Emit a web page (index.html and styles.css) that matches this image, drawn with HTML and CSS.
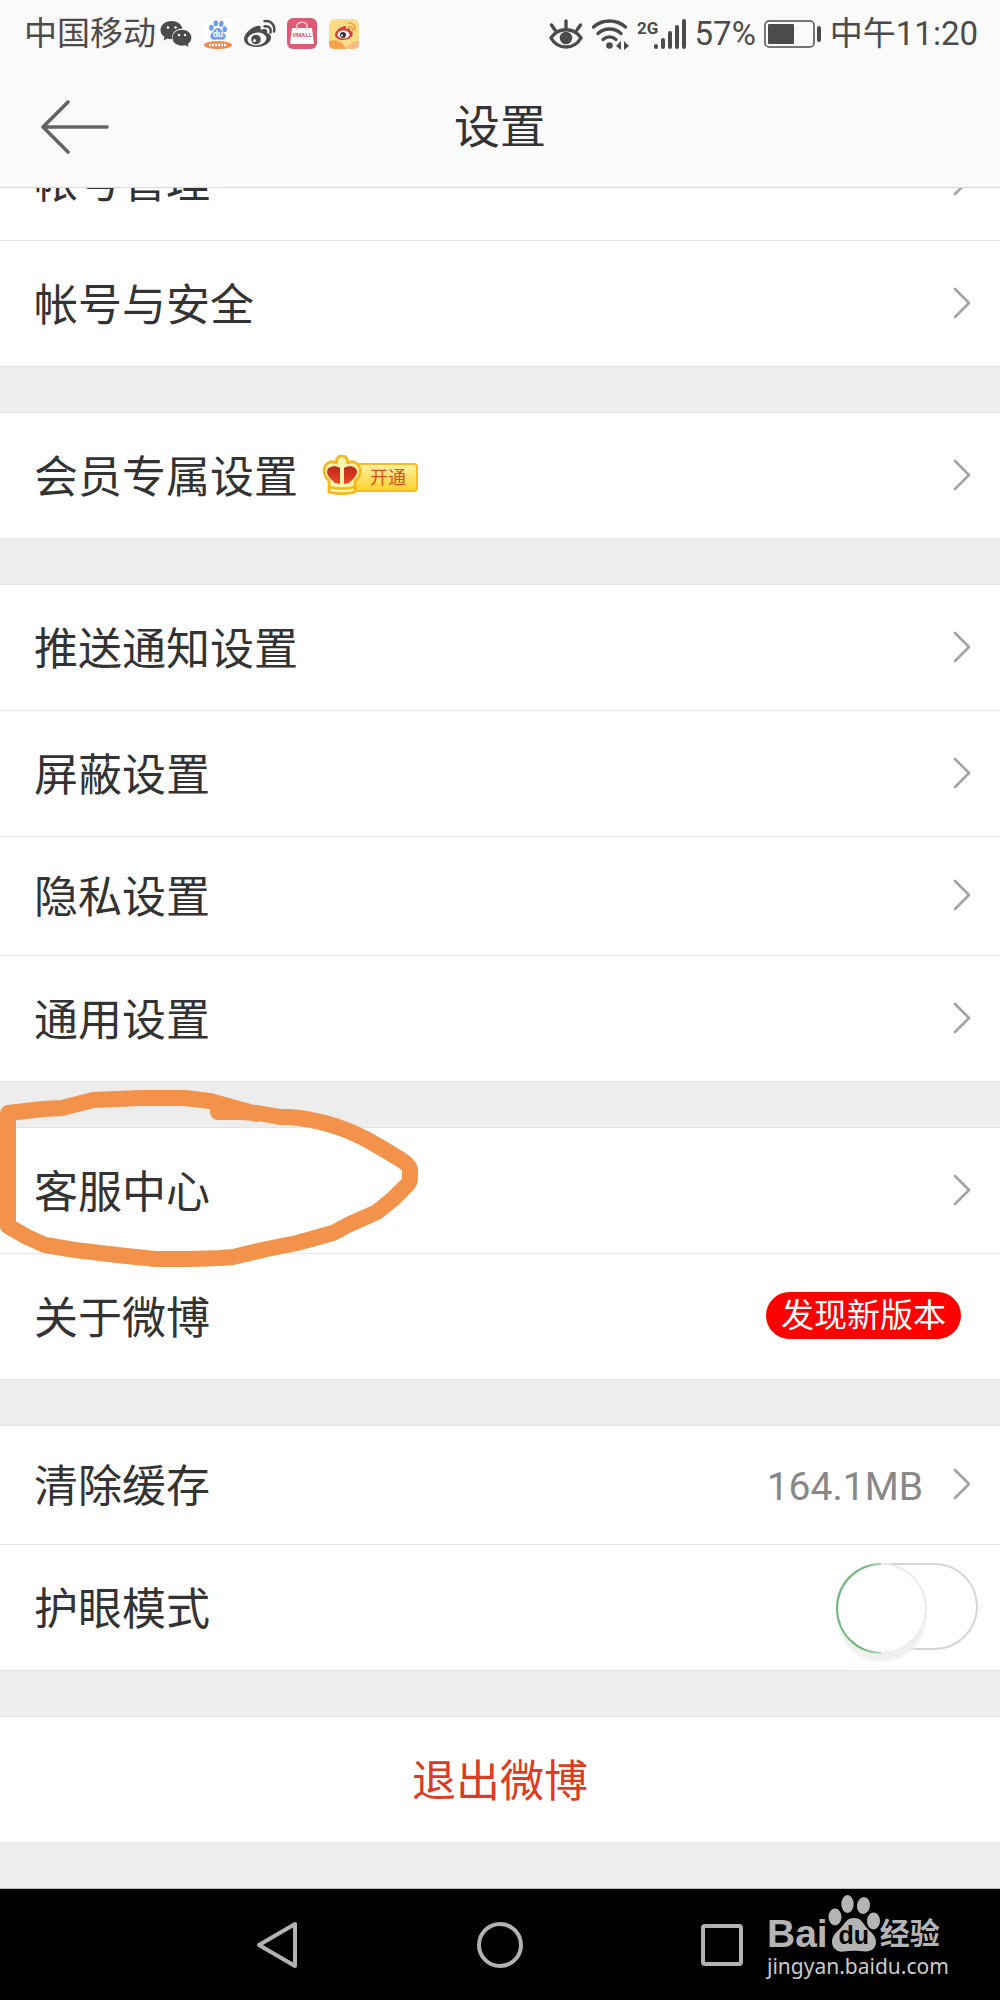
FILE: index.html
```html
<!DOCTYPE html>
<html lang="zh-CN">
<head>
<meta charset="utf-8">
<meta name="viewport" content="width=device-width, initial-scale=1">
<title>设置</title>
<link rel="stylesheet" href="styles.css">
</head>
<body>
<svg class="defs" aria-hidden="true">
  <symbol id="chevron" viewBox="0 0 18 32"><path d="M2 2 16 16 2 30" fill="none" stroke="#a3a3a3" stroke-width="2.6" stroke-linecap="round" stroke-linejoin="round"/></symbol>
  <symbol id="paw" viewBox="0 0 52 57"><ellipse cx="7" cy="22" rx="6.5" ry="8.5"/><ellipse cx="19.500" cy="9" rx="6.200" ry="9"/><ellipse cx="35.500" cy="10.500" rx="6.500" ry="8.500" transform="rotate(10 35.500 10.500)"/><ellipse cx="45.500" cy="26" rx="6.500" ry="8.500"/><path d="M26 23c7 0 9 5 12 9 4 5 10 8 10 15 0 6-5 10-11 9.500-8-1-14-1-21 0C9 57.500 4 53 4 47c0-7 5-10 9.500-15 3.500-4 5.500-9 12.500-9z"/></symbol>
  <symbol id="weibo" viewBox="0 0 32 32"><path stroke="none" d="M13 8C7.500 9 0 16 0 21c0 5 6 8 12.500 8C21 29 27 24 27 19.500c0-2.500-2-4-4-4.500.900-3-.500-5.500-6.500-3C17.500 8.500 16 7.300 13 8z"/><path d="M20.500 8.500c4-1 7 2 6 6M20.500 3.200c6.500-1.500 11 4.500 9.500 10.300" fill="none" stroke-width="2.400" stroke-linecap="round"/></symbol>
</svg>
<div class="app">
  <header class="top">
    <div class="status">
      <div class="status-side">
        <span>中国移动</span>
        <svg class="app-icon" viewBox="0 0 32 32" aria-label="微信"><path fill="#4b4b4b" d="M11.500 3C5 3 .500 7 .500 12c0 3 1.500 5.300 4 7l-1 3.500 4-2c1.500.500 3 .700 4.500.600-.800-6 4-10.600 10.600-10.600C21.500 6 17 3 11.500 3z"/><path fill="#4b4b4b" d="M22 11.800c-5.500 0-9.500 3.500-9.500 8s4 7.900 9.500 7.900c1.200 0 2.300-.200 3.400-.500l3.200 1.800-.800-3c2.200-1.500 3.600-3.700 3.600-6.200 0-4.500-4.400-8-9.400-8z"/><g fill="#fafafa"><circle cx="8" cy="9.500" r="1.300"/><circle cx="15.500" cy="9.500" r="1.300"/><circle cx="19" cy="17" r="1.200"/><circle cx="25" cy="17" r="1.200"/></g></svg>
        <svg class="app-icon" viewBox="0 0 32 32" aria-label="百度"><rect x="2" y="1" width="28" height="29" rx="5" fill="#fff"/><use href="#paw" x="7" y="2" width="18" height="20" fill="#6f9bf5"/><text x="16" y="19" class="mini-du">du</text><ellipse cx="16" cy="27" rx="14" ry="4" fill="#f5894b"/><path d="M7 27h18" stroke="#fff" stroke-width="2.500" stroke-dasharray="2 1"/></svg>
        <svg class="app-icon" viewBox="0 0 32 32" aria-label="微博"><use href="#weibo" fill="#4b4b4b" stroke="#4b4b4b"/><ellipse cx="13" cy="21" rx="9.500" ry="6.300" fill="#fafafa" transform="rotate(-8 13 21)"/><circle cx="12" cy="21.500" r="4.800" fill="#4b4b4b"/><circle cx="10.500" cy="22.500" r="1.600" fill="#fafafa"/></svg>
        <svg class="app-icon" viewBox="0 0 32 32" aria-label="VMALL"><rect x="1" y="0" width="30" height="31" rx="6" fill="#dc5a74"/><path d="M6 10h20l2 16H4z" fill="#fff"/><path d="M11 12V8c0-5 10-5 10 0v4" fill="none" stroke="#f6c6cf" stroke-width="1.600"/><text x="16" y="19" class="mini-vmall">VMALL</text></svg>
        <svg class="app-icon" viewBox="0 0 32 32" aria-label="微博"><rect x="1" y="1" width="30" height="30" rx="6" fill="#fbdd88"/><path d="M1 23c7-2 13 0 17 8H7c-4 0-6-2-6-5z" fill="#f7a04d"/><path d="M18 30c1-5 6-3 7-6 3-1 5-1 6-1v3c0 3-2 5-5 5z" fill="#fcb98a"/><use href="#weibo" x="7" y="3" width="21" height="21" fill="#d9413e" stroke="#f0a13e"/><ellipse cx="15.500" cy="16.500" rx="6" ry="4" fill="#fff"/><circle cx="15" cy="17" r="3" fill="#333"/><circle cx="14" cy="17.500" r="1" fill="#fff"/></svg>
      </div>
      <div class="status-side status-right">
        <svg class="eye" viewBox="0 0 34 32" aria-hidden="true"><g fill="none" stroke="#4b4b4b" stroke-width="3.400" stroke-linecap="round"><path d="M2 20c7-11 23-11 30 0-7 12-23 12-30 0zM17 10V3M6 12 2.500 7M28 12l3.500-5"/></g><circle cx="17" cy="20" r="6.300" fill="#4b4b4b"/></svg>
        <svg class="wifi" viewBox="0 0 38 32" aria-hidden="true"><g fill="none" stroke="#4b4b4b" stroke-width="3.400" stroke-linecap="round"><path d="M2.500 9c9-8 23-8 32 0M7 15.500c6.500-6 16.500-6 23 0M12 21.500c4-3.500 9-3.500 13 0"/></g><circle cx="18.500" cy="27.500" r="3.300" fill="#4b4b4b"/><path d="M30 23v9l-5-4zM32 23v9M33 23l5 5-5 4z" fill="#4b4b4b"/></svg>
        <svg class="signal" viewBox="0 0 50 32" aria-hidden="true"><text x="0" y="16" class="net">2G</text><g stroke="#4b4b4b" stroke-width="4" stroke-linecap="round"><path d="M19 28v1M26 22v7M33 15v14M40 9v20M47 3v26"/></g></svg>
        <span>57%</span>
        <svg class="battery" viewBox="0 0 58 28" aria-hidden="true"><rect x="1" y="1" width="49" height="26" rx="4" fill="none" stroke="#4b4b4b" stroke-width="1.500"/><rect x="4" y="4" width="26" height="20" rx="1" fill="#4b4b4b"/><path d="M55 8v12" stroke="#4b4b4b" stroke-width="4" stroke-linecap="round"/></svg>
        <span>中午11:20</span>
      </div>
    </div>
    <div class="title-bar">
      <button class="back" type="button" aria-label="返回"><svg viewBox="0 0 68 54"><path d="M27 2 2 27l25 25M2 27h64" fill="none" stroke="#646464" stroke-width="3.600" stroke-linecap="round" stroke-linejoin="round"/></svg></button>
      <h1>设置</h1>
    </div>
  </header>

  <main class="list">
    <section class="group">
      <a class="row short" href="#accounts"><span>帐号管理</span><svg class="chevron"><use href="#chevron"/></svg></a>
      <a class="row" href="#security"><span>帐号与安全</span><svg class="chevron"><use href="#chevron"/></svg></a>
    </section>
    <section class="group">
      <a class="row" href="#vip"><span>会员专属设置</span>
        <span class="vip"><svg class="crown" viewBox="0 0 40 40" aria-hidden="true"><defs><linearGradient id="gem" x1="0" y1="0" x2="0" y2="1"><stop offset="0" stop-color="#b92a1a"/><stop offset="1" stop-color="#f2452a"/></linearGradient></defs><path d="M15 8.500a5.500 5.500 0 1 1 10 0c4-3 9-2 11.500 2 3.500 5 1.500 11-3.500 15.500v11c-8 2-18 2-26 0V26C2.500 21.500.500 15.500 3.500 10.500 6 6.500 11 5.500 15 8.500z" fill="#fff3ae" stroke="#f6b91b" stroke-width="2.800"/><path d="M18 13C12 9.500 5 12 5 17c0 4 5 8 8 11l5 1zM22 13c6-3.500 13-1 13 4 0 4-5 8-8 11l-5 1z" fill="url(#gem)"/><path d="M7 32c8 2 18 2 26 0" fill="none" stroke="#f6b91b" stroke-width="2.500"/></svg><span class="vip-label">开通</span></span>
        <svg class="chevron"><use href="#chevron"/></svg></a>
    </section>
    <section class="group">
      <a class="row" href="#push"><span>推送通知设置</span><svg class="chevron"><use href="#chevron"/></svg></a>
      <a class="row" href="#block"><span>屏蔽设置</span><svg class="chevron"><use href="#chevron"/></svg></a>
      <a class="row short" href="#privacy"><span>隐私设置</span><svg class="chevron"><use href="#chevron"/></svg></a>
      <a class="row" href="#general"><span>通用设置</span><svg class="chevron"><use href="#chevron"/></svg></a>
    </section>
    <section class="group">
      <a class="row marked" href="#service"><span>客服中心</span><svg class="chevron"><use href="#chevron"/></svg>
        <svg class="ring" viewBox="0 0 420 182" aria-hidden="true"><path d="M218 24h22l18 1 22 4 10 0q45 4 83 26l17 10 13 8q7 5 7 9v9q0 4-6 9l-11 11-16 13-27 12-17 9-36 10-30 6-34 8-13 1-30 1h-35l-38-4-42-5-30-5-18-8-19-11V25l35-4 19-1 31-8 47-2h45l25 3 47 13" fill="none" stroke="#f3934b" stroke-width="16" stroke-linecap="round" stroke-linejoin="round"/></svg></a>
      <a class="row" href="#about"><span>关于微博</span><span class="badge">发现新版本</span></a>
    </section>
    <section class="group">
      <a class="row short" href="#cache"><span>清除缓存</span><span class="value">164.1MB</span><svg class="chevron"><use href="#chevron"/></svg></a>
      <div class="row"><label for="eye-care">护眼模式</label><input class="switch" id="eye-care" type="checkbox" role="switch"></div>
    </section>
    <section class="group">
      <button class="row logout" type="button">退出微博</button>
    </section>
  </main>

  <nav class="nav">
    <button type="button" aria-label="返回"><svg viewBox="0 0 48 48"><path d="M41 3v42L5 24z"/></svg></button>
    <button type="button" aria-label="主屏幕"><svg viewBox="0 0 48 48"><circle cx="24" cy="24" r="21"/></svg></button>
    <button type="button" aria-label="最近任务"><svg viewBox="0 0 48 48"><rect x="5" y="5" width="38" height="38" rx="2"/></svg></button>
    <div class="watermark">
      <div class="brand"><span class="bai">Bai</span><span class="paw"><svg viewBox="0 0 52 57" aria-hidden="true"><use href="#paw" fill="#b4b4b4"/></svg><span class="du">du</span></span><span class="jy">经验</span></div>
      <div class="site">jingyan.baidu.com</div>
    </div>
  </nav>
</div>
</body>
</html>
```
FILE: styles.css
```css
* { box-sizing: border-box; }
body {
  margin: 0;
  background: #ededed;
  color: #333;
  font-family: Roboto, "Noto Sans CJK SC", sans-serif;
}
button, input { font: inherit; margin: 0; }
button { background: none; border: 0; padding: 0; color: inherit; }
a { color: inherit; text-decoration: none; }
svg { display: block; flex: none; }
.defs { position: absolute; width: 0; height: 0; }

.app { min-height: 100vh; display: flex; flex-direction: column; overflow: hidden; }

/* Status bar and title */
.top { position: relative; z-index: 2; background: #fafafa; border-bottom: 1px solid #d8d8d8; }
.status {
  display: flex;
  justify-content: space-between;
  height: 68px;
  padding: 0 22px 0 24px;
  color: #4b4b4b;
  font-size: 33px;
  line-height: 72px;
}
.status-side { display: flex; align-items: center; gap: 10px; white-space: nowrap; }
.status-right { gap: 8px; }
.app-icon { width: 32px; height: 32px; }
.app-icon:first-of-type { margin-left: -6px; }
.eye { width: 34px; height: 32px; }
.wifi { width: 38px; height: 32px; }
.signal { width: 50px; height: 32px; }
.battery { width: 58px; height: 28px; }
.net { font: 700 17px "Roboto", sans-serif; fill: #4b4b4b; }
.mini-du { font: 700 9px Roboto, sans-serif; fill: #fff; text-anchor: middle; }
.mini-vmall { font: 700 6px Roboto, sans-serif; fill: #dc5a74; text-anchor: middle; }
.title-bar {
  display: grid;
  grid-template-columns: 1fr auto 1fr;
  align-items: center;
  height: 119px;
  padding: 0 41px 2px;
}
.back svg { width: 68px; height: 54px; }
h1 { margin: 0; font-size: 46px; font-weight: 400; line-height: 60px; }

/* Settings list, scrolled partly under the header */
.list { flex: 1; margin-top: -67px; display: flex; flex-direction: column; gap: 45px; padding-bottom: 44px; }
.group { background: #fff; border-top: 1px solid #e4e4e4; }
.row {
  display: flex;
  align-items: center;
  width: 100%;
  height: 126px;
  padding: 4px 29px 0 34px;
  border-bottom: 1px solid #e6e6e6;
  font-size: 44px;
  line-height: 60px;
}
.short { height: 119px; }
.chevron { width: 18px; height: 32px; margin-left: auto; margin-bottom: 6px; }
.value { margin-left: auto; color: #888; font-size: 39px; }
.value + .chevron { margin-left: 30px; }
.badge {
  margin: 0 10px 6px auto;
  padding: 0 15px;
  border-radius: 24px;
  background: #f00;
  color: #fff;
  font-size: 33px;
  line-height: 47px;
}
.logout { justify-content: center; padding: 4px 0 0; color: #dd3b23; }

/* Membership badge */
.vip { display: flex; align-items: center; margin: 0 0 6px 24px; }
.crown { width: 40px; height: 40px; position: relative; }
.vip-label {
  margin: 6px 0 0 -8px;
  padding: 0 10px 0 14px;
  height: 29px;
  border: 2px solid #f8b928;
  border-radius: 4px;
  background: linear-gradient(#fff0a0, #ffd42e);
  color: #d9501e;
  font-size: 18px;
  line-height: 25px;
}

/* Eye-care switch */
.switch {
  appearance: none;
  width: 142px;
  height: 87px;
  margin: 0 -7px 6px auto;
  border: 2px solid #d6d6d6;
  border-radius: 44px;
  background: #fff;
}
.switch::before {
  content: "";
  display: block;
  width: 87px;
  height: 87px;
  margin: -2px;
  border: 2px solid transparent;
  border-radius: 50%;
  background:
    linear-gradient(#fff, #fff) padding-box,
    linear-gradient(90deg, #6db87b 0 30%, #b5d9bb 50%, #ececec 50%) border-box;
  box-shadow: 0 9px 3px -1px #f0f0f0;
}
.switch:checked::before { margin-left: 53px; }

/* Hand-drawn ring around the marked row */
.marked { position: relative; }
.ring { position: absolute; left: 0; top: -40px; width: 420px; height: 182px; pointer-events: none; }

/* System navigation */
.nav {
  position: relative;
  display: flex;
  justify-content: center;
  align-items: center;
  gap: 174px;
  height: 112px;
  background: #000;
  border-top: 1px solid #bbb;
}
.nav button svg { width: 48px; height: 48px; fill: none; stroke: #b2b2b2; stroke-width: 4; stroke-linejoin: round; }
.watermark { position: absolute; right: 56px; bottom: 20px; width: 177px; color: #b4b4b4; }
.brand { display: flex; align-items: flex-end; height: 57px; }
.bai { font: 700 39px/36px "Liberation Sans", sans-serif; }
.paw { position: relative; width: 52px; height: 57px; }
.du {
  position: absolute;
  inset: 28px 0 0;
  color: #000;
  font: 700 25px/24px "Liberation Sans", sans-serif;
  text-align: center;
}
.jy { font-size: 30px; line-height: 36px; font-weight: 700; }
.site { font: 21px/28px "Noto Sans", sans-serif; white-space: nowrap; color: #ccc; }
```
